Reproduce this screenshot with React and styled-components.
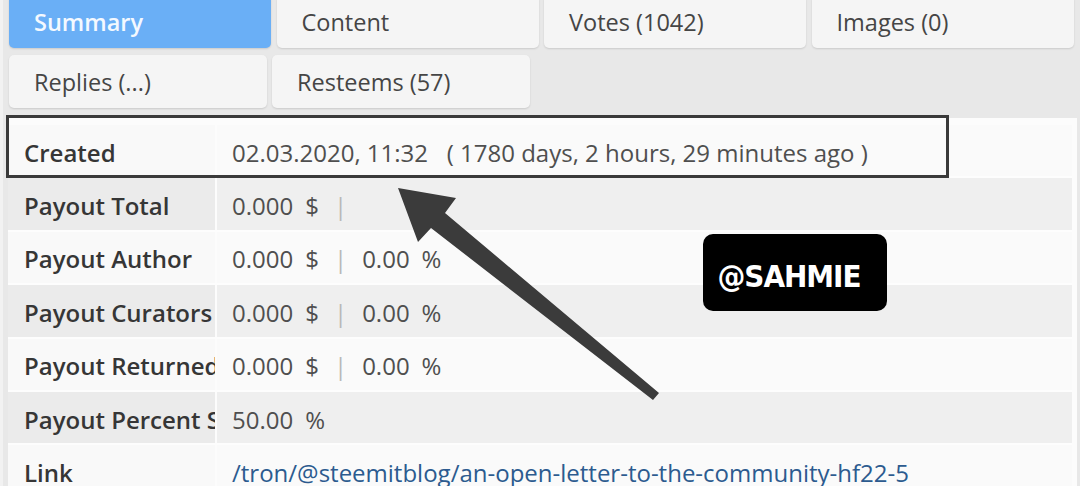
import React from "react";
import styled, { createGlobalStyle } from "styled-components";

const GlobalStyle = createGlobalStyle`
  html, body { margin: 0; padding: 0; }
  body {
    background: #e8e8e8;
    font-family: "Open Sans", "Noto Sans", sans-serif;
    overflow: hidden;
  }
`;

const Page = styled.div`
  position: relative;
  width: 1080px;
  height: 486px;
  overflow: hidden;
  box-sizing: border-box;
  border-left: 3px solid #f2f2f2;
  background: #e8e8e8;
`;

const TabGrid = styled.div`
  display: grid;
  grid-template-columns: repeat(4, 262px);
  column-gap: 5.5px;
  margin-top: -5px;
  padding: 0 0 0 6px;
`;

const TabRow = styled.div`
  display: flex;
  gap: 5px;
  margin-top: 7px;
  padding-left: 6px;
`;

const Tab = styled.div`
  box-sizing: border-box;
  height: 53px;
  width: ${(p) => (p.$w ? `${p.$w}px` : "auto")};
  display: flex;
  align-items: center;
  padding: 0 0 0 25px;
  border-radius: 5px;
  font-size: 23.5px;
  font-weight: ${(p) => (p.$active ? 600 : 400)};
  color: ${(p) => (p.$active ? "#f4f9ff" : "#454545")};
  background: ${(p) => (p.$active ? "#6aaff6" : "#f5f5f5")};
  box-shadow: 0 1px 2px rgba(0, 0, 0, 0.13);
  white-space: nowrap;
`;

const Panel = styled.div`
  margin: 10px 0 0 5px;
  width: 1069px;
  background: #fcfcfc;
  padding: 7px 5px 0 0;
  box-sizing: border-box;
`;

const Row = styled.div`
  display: grid;
  grid-template-columns: 207px 1fr;
  column-gap: 2px;
  height: 53.4px;
  box-sizing: border-box;
  border-bottom: 2px solid #fdfdfd;
`;

const Label = styled.div`
  display: flex;
  align-items: center;
  padding: 3px 0 0 16px;
  overflow: hidden;
  white-space: nowrap;
  font-size: 24px;
  font-weight: 600;
  color: #363636;
  background: ${(p) => (p.$alt ? "#ebebeb" : "#f9f9f9")};
`;

const Value = styled.div`
  display: flex;
  align-items: center;
  padding: 3px 0 0 15px;
  white-space: pre;
  font-size: 24px;
  color: #4f4f4f;
  background: ${(p) => (p.$alt ? "#efefef" : "#fafafa")};
`;

const Unit = styled.span`
  margin-left: 12px;
`;

const Sep = styled.span`
  color: #b8b8b8;
  margin: 0 15px 0 15px;
`;

const LinkText = styled.a`
  color: #2c5b8f;
  text-decoration: none;
`;

const HighlightBox = styled.div`
  position: absolute;
  left: 3px;
  top: 115px;
  width: 943px;
  height: 63px;
  box-sizing: border-box;
  border: 3px solid #3a3a3a;
  pointer-events: none;
`;

const ArrowLayer = styled.svg`
  position: absolute;
  left: 0;
  top: 0;
  pointer-events: none;
`;

const Badge = styled.div`
  position: absolute;
  left: 700px;
  top: 234px;
  width: 184px;
  height: 77px;
  box-sizing: border-box;
  padding: 6px 12px 0 0;
  border-radius: 10px;
  background: #000;
  color: #fff;
  display: flex;
  align-items: center;
  justify-content: center;
  font-family: "DejaVu Sans Condensed", "DejaVu Sans", "Noto Sans", sans-serif;
  font-stretch: condensed;
  font-weight: 600;
  font-size: 31px;
  letter-spacing: -1px;
`;

const Money = ({ pct }) => (
  <>
    <span>0.000</span>
    <Unit>$</Unit>
    <Sep>|</Sep>
    {pct && (
      <>
        <span>0.00</span>
        <Unit>%</Unit>
      </>
    )}
  </>
);

export default function App() {
  return (
    <Page>
      <GlobalStyle />
      <TabGrid>
        <Tab $active>Summary</Tab>
        <Tab>Content</Tab>
        <Tab>Votes (1042)</Tab>
        <Tab>Images (0)</Tab>
      </TabGrid>
      <TabRow>
        <Tab $w={258}>Replies (...)</Tab>
        <Tab $w={258}>Resteems (57)</Tab>
      </TabRow>
      <Panel>
        <Row>
          <Label>Created</Label>
          <Value>02.03.2020, 11:32{"   "}( 1780 days, 2 hours, 29 minutes ago )</Value>
        </Row>
        <Row>
          <Label $alt>Payout Total</Label>
          <Value $alt>
            <Money />
          </Value>
        </Row>
        <Row>
          <Label>Payout Author</Label>
          <Value>
            <Money pct />
          </Value>
        </Row>
        <Row>
          <Label $alt>Payout Curators</Label>
          <Value $alt>
            <Money pct />
          </Value>
        </Row>
        <Row>
          <Label>Payout Returned</Label>
          <Value>
            <Money pct />
          </Value>
        </Row>
        <Row>
          <Label $alt>Payout Percent Steem</Label>
          <Value $alt>
            <span>50.00</span>
            <Unit>%</Unit>
          </Value>
        </Row>
        <Row>
          <Label>Link</Label>
          <Value>
            <LinkText href="#">/tron/@steemitblog/an-open-letter-to-the-community-hf22-5</LinkText>
          </Value>
        </Row>
      </Panel>
      <HighlightBox />
      <ArrowLayer width="1080" height="486" viewBox="0 0 1080 486">
        <polygon
          points="395,188 453,198 442,213 656,393 650,400 428,228 415,242"
          fill="#3b3b3b"
        />
      </ArrowLayer>
      <Badge>@SAHMIE</Badge>
    </Page>
  );
}
